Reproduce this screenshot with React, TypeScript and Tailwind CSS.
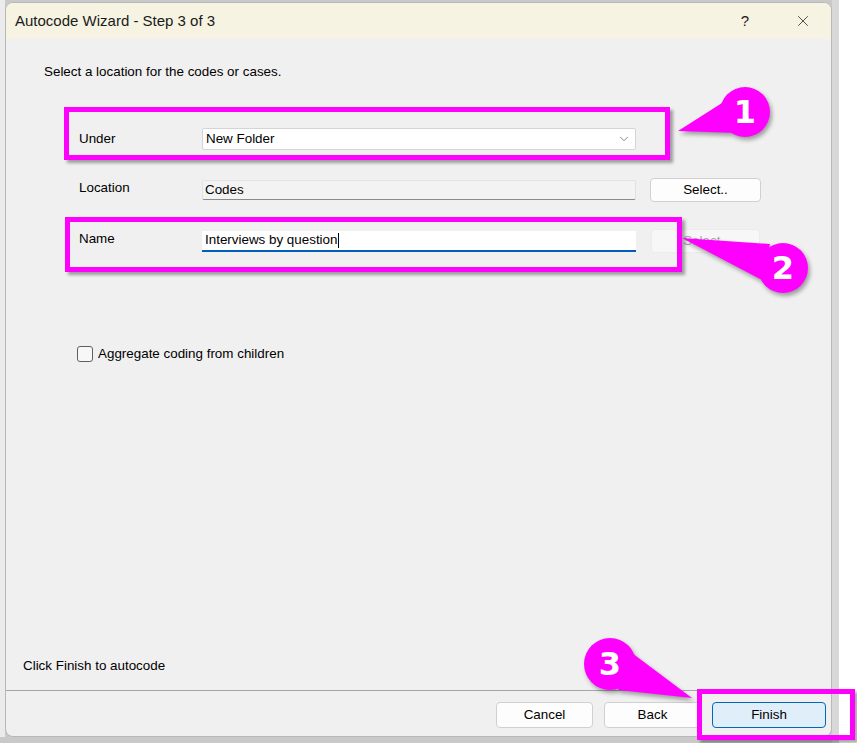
import { ChevronDown, X } from "lucide-react";

const ui = { fontFamily: '"Liberation Sans", Arial, sans-serif' };

function Callout({ cx, cy, r, tri, label }: { cx: number; cy: number; r: number; tri: string; label: string }) {
  return (
    <>
      <svg
        className="absolute left-0 top-0 pointer-events-none"
        width={857}
        height={743}
        style={{ filter: "drop-shadow(2px 3px 2px rgba(0,0,0,0.35))" }}
      >
        <polygon points={tri} fill="#ff00ff" />
        <circle cx={cx} cy={cy} r={r} fill="#ff00ff" />
      </svg>
      <span
        className="absolute flex items-center justify-center text-white font-bold text-[32px] leading-none"
        style={{
          left: cx - r,
          top: cy - r,
          width: r * 2,
          height: r * 2,
          fontFamily: '"DejaVu Sans", Verdana, sans-serif',
        }}
      >
        {label}
      </span>
    </>
  );
}

function Highlight({ x, y, w, h }: { x: number; y: number; w: number; h: number }) {
  return (
    <div
      className="absolute border-[5px] border-[#ff00ff] shadow-[3px_3px_3px_rgba(0,0,0,0.35)] pointer-events-none"
      style={{ left: x, top: y, width: w, height: h }}
    />
  );
}

function Button({ children, w, primary }: { children: string; w: number; primary?: boolean }) {
  return (
    <button
      type="button"
      className={`h-[26px] rounded-[4px] border text-[13.4px] text-black ${
        primary ? "bg-[#e0eef9] border-[#0067c0]" : "bg-[#fdfdfd] border-[#d0d0d0]"
      }`}
      style={{ width: w }}
    >
      {children}
    </button>
  );
}

export default function App() {
  return (
    <div className="relative w-[857px] h-[743px] overflow-hidden bg-[#c9c9c9] flex" style={ui}>
      <div className="w-[5px] h-[737px] bg-[#ebebeb]" />

      {/* dialog */}
      <div className="mt-[2px] w-[827px] h-[735px] flex flex-col rounded-[8px] bg-[#f0f0f0] border border-[#b8b8b8] overflow-hidden">
        <div className="h-[36px] shrink-0 bg-[#f6f3e3] flex items-center pl-[9px] pr-[19px]">
          <span className="text-[15px] text-[#1a1a1a]">Autocode Wizard - Step 3 of 3</span>
          <span className="ml-auto text-[15px] text-[#1a1a1a] w-[20px] text-center">?</span>
          <span className="ml-[39px] flex items-center">
            <X size={18} strokeWidth={1} color="#1a1a1a" />
          </span>
        </div>

        <div className="flex-1 flex flex-col pl-[38px] pt-[25px] text-[13.4px]">
          <p className="text-black leading-[16px]">Select a location for the codes or cases.</p>

          <div className="ml-[35px] mt-[48px] flex flex-col">
            <div className="flex items-center h-[22px]">
              <span className="w-[123px] text-black">Under</span>
              <div className="w-[434px] h-[22px] bg-white border border-[#d4d4d4] rounded-[2px] flex items-center pl-[3px] pr-[4px]">
                <span className="text-black">New Folder</span>
                <ChevronDown className="ml-auto" size={14} strokeWidth={1} color="#333" />
              </div>
            </div>

            <div className="flex items-center h-[24px] mt-[28px]">
              <span className="w-[123px] text-black -mt-[4px]">Location</span>
              <div className="w-[434px] h-[20px] bg-[#f3f3f3] border border-[#e2e2e2] border-b-[#8a8a8a] rounded-[2px] flex items-center pl-[2px]">
                <span className="text-black">Codes</span>
              </div>
              <div className="ml-[14px]">
                <button
                  type="button"
                  className="w-[111px] h-[24px] rounded-[4px] bg-[#fdfdfd] border border-[#d0d0d0] text-black"
                >
                  Select..
                </button>
              </div>
            </div>

            <div className="flex items-center h-[24px] mt-[27px]">
              <span className="w-[123px] text-black -mt-[4px]">Name</span>
              <div className="w-[434px] h-[21px] bg-white border-b-2 border-[#005fb8] flex items-center pl-[3px]">
                <span className="text-black">Interviews by question</span>
                <span className="w-px h-[15px] bg-black" />
              </div>
              <div className="ml-[15px]">
                <button
                  type="button"
                  className="w-[109px] h-[24px] rounded-[4px] bg-[#f7f7f7] border border-[#ececec] text-[#a8a8a8]"
                >
                  Select..
                </button>
              </div>
            </div>
          </div>

          <label className="mt-[91px] ml-[33px] flex items-center gap-[5px]">
            <span className="w-[16px] h-[16px] rounded-[3px] border border-[#5f5f5f] bg-[#f7f7f7]" />
            <span className="text-black">Aggregate coding from children</span>
          </label>

          <div className="flex-1" />

          <p className="-ml-[21px] text-black mb-[14px]">Click Finish to autocode</p>
        </div>

        <div className="h-[46px] shrink-0 border-t border-[#a6a6a6] flex items-start justify-end pt-[11px] pr-[5px] gap-[11px]">
          <Button w={97}>Cancel</Button>
          <Button w={97}>Back</Button>
          <Button w={114} primary>
            Finish
          </Button>
        </div>
      </div>

      <div className="w-[7px] h-[743px] bg-[#d8d8d8]" />
      <div className="flex-1 h-[743px] bg-white" />

      {/* annotations */}
      <Highlight x={64} y={107} w={606} h={53} />
      <Highlight x={65} y={217} w={617} h={55} />
      <Highlight x={697} y={689} w={158} h={51} />

      <Callout cx={745} cy={112} r={25} tri="678,131 722,103 736,133" label="1" />
      <Callout cx={783} cy={268} r={25} tri="682,238 770,244 762,280" label="2" />
      <Callout cx={610} cy={664} r={26} tri="692,698 628,650 618,690" label="3" />
    </div>
  );
}
